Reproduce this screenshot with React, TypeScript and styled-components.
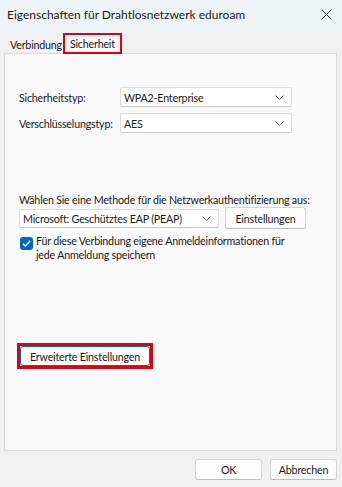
import React from "react";
import styled, { createGlobalStyle } from "styled-components";

const GlobalStyle = createGlobalStyle`
  html, body {
    margin: 0;
    padding: 0;
    background: #f0f0f0;
  }
  body {
    font-family: Lato, "Liberation Sans", sans-serif;
    font-size: 10.7px;
    letter-spacing: -0.2px;
    line-height: 15px;
    color: #1a1a1a;
  }
`;

const Window = styled.div`
  width: 342px;
  height: 487px;
  background: #f0f0f0;
  display: flex;
  flex-direction: column;
  box-sizing: border-box;
  overflow: hidden;
`;

const TitleBar = styled.div`
  height: 33px;
  flex: none;
  display: flex;
  align-items: center;
  justify-content: space-between;
  padding: 0 10px 5px 7px;
  box-sizing: border-box;
  background: #eef3f5;
  font-size: 12px;
  letter-spacing: 0;
  color: #1b1b1b;
`;

const CloseButton = styled.div`
  width: 11px;
  height: 11px;
  display: flex;
`;

const TabStrip = styled.div`
  flex: none;
  display: flex;
  align-items: flex-end;
  height: 20px;
  padding-left: 7px;
  position: relative;
  z-index: 1;
`;

const Tab = styled.div<{ $active?: boolean }>`
  height: ${(p) => (p.$active ? "21px" : "17px")};
  box-sizing: border-box;
  display: flex;
  align-items: center;
  padding: 0 ${(p) => (p.$active ? "5px" : "3px")};
  background: ${(p) => (p.$active ? "#f9f9f9" : "transparent")};
  border: ${(p) => (p.$active ? "2px solid #e0000f" : "none")};
  margin: ${(p) => (p.$active ? "0 0 -1px -2px" : "0")};
`;

const Panel = styled.div`
  flex: 1;
  margin: 0 5px 0 4px;
  background: #f9f9f9;
  border: 1px solid #dadada;
  display: flex;
  flex-direction: column;
  padding: 33px 14px 0 14px;
`;

const FieldGrid = styled.div`
  display: grid;
  grid-template-columns: 101px 172px;
  row-gap: 6px;
  align-items: center;
`;

const Label = styled.div`
  white-space: nowrap;
`;

const Select = styled.div<{ $width?: number; $height?: number }>`
  height: ${(p) => p.$height ?? 20}px;
  width: ${(p) => (p.$width ? `${p.$width}px` : "auto")};
  box-sizing: border-box;
  background: #ffffff;
  border: 1px solid #dcdcdc;
  border-bottom-color: #c8c8c8;
  border-radius: 2px;
  display: flex;
  align-items: center;
  justify-content: space-between;
  padding: 0 7px 0 3px;
  white-space: nowrap;
`;

const Chevron = () => (
  <svg width="9" height="5" viewBox="0 0 9 5">
    <path d="M0.5 0.5 L4.5 4.5 L8.5 0.5" fill="none" stroke="#6a6a6a" strokeWidth="1" />
  </svg>
);

const MethodLabel = styled.div`
  margin-top: 59px;
  white-space: nowrap;
`;

const MethodRow = styled.div`
  display: flex;
  align-items: center;
  gap: 6px;
`;

const Button = styled.div<{ $width: number; $height?: number; $focused?: boolean }>`
  width: ${(p) => p.$width}px;
  height: ${(p) => p.$height ?? 21}px;
  box-sizing: border-box;
  background: #fdfdfd;
  border: 1px solid ${(p) => (p.$focused ? "#0067c0" : "#d4d4d4")};
  border-bottom-color: ${(p) => (p.$focused ? "#0067c0" : "#bdbdbd")};
  border-radius: 3px;
  display: flex;
  align-items: center;
  justify-content: center;
  white-space: nowrap;
`;

const CheckRow = styled.div`
  display: flex;
  align-items: flex-start;
  gap: 3px;
  margin-top: 5px;
  padding-left: 1px;
  line-height: 14px;
  white-space: nowrap;
`;

const CheckBox = styled.div`
  width: 13px;
  height: 13px;
  flex: none;
  margin-top: 3px;
  border-radius: 3px;
  background: #0067c0;
  display: flex;
  align-items: center;
  justify-content: center;
`;

const Highlight = styled.div`
  margin-top: 81px;
  margin-left: -2px;
  align-self: flex-start;
  border: 3px solid #e0000f;
`;

const Footer = styled.div`
  height: 36px;
  flex: none;
  display: flex;
  justify-content: flex-end;
  align-items: center;
  gap: 8px;
  padding-right: 5px;
`;

export default function App() {
  return (
    <>
      <GlobalStyle />
      <Window>
        <TitleBar>
          <span>Eigenschaften für Drahtlosnetzwerk eduroam</span>
          <CloseButton>
            <svg width="11" height="11" viewBox="0 0 11 11">
              <path d="M0.5 0.5 L10.5 10.5 M10.5 0.5 L0.5 10.5" stroke="#2a2a2a" strokeWidth="1" />
            </svg>
          </CloseButton>
        </TitleBar>
        <TabStrip>
          <Tab>Verbindung</Tab>
          <Tab $active>Sicherheit</Tab>
        </TabStrip>
        <Panel>
          <FieldGrid>
            <Label>Sicherheitstyp:</Label>
            <Select>
              <span>WPA2-Enterprise</span>
              <Chevron />
            </Select>
            <Label>Verschlüsselungstyp:</Label>
            <Select>
              <span>AES</span>
              <Chevron />
            </Select>
          </FieldGrid>
          <MethodLabel>Wählen Sie eine Methode für die Netzwerkauthentifizierung aus:</MethodLabel>
          <MethodRow>
            <Select $width={200} $height={19}>
              <span>Microsoft: Geschütztes EAP (PEAP)</span>
              <Chevron />
            </Select>
            <Button $width={81} $height={22}>
              Einstellungen
            </Button>
          </MethodRow>
          <CheckRow>
            <CheckBox>
              <svg width="9" height="7" viewBox="0 0 9 7">
                <path d="M0.8 3.6 L3.3 6 L8.2 0.8" fill="none" stroke="#ffffff" strokeWidth="1.3" />
              </svg>
            </CheckBox>
            <span>
              Für diese Verbindung eigene Anmeldeinformationen für
              <br />
              jede Anmeldung speichern
            </span>
          </CheckRow>
          <Highlight>
            <Button $width={130} $height={20} $focused>
              Erweiterte Einstellungen
            </Button>
          </Highlight>
        </Panel>
        <Footer>
          <Button $width={67}>OK</Button>
          <Button $width={67}>Abbrechen</Button>
        </Footer>
      </Window>
    </>
  );
}
